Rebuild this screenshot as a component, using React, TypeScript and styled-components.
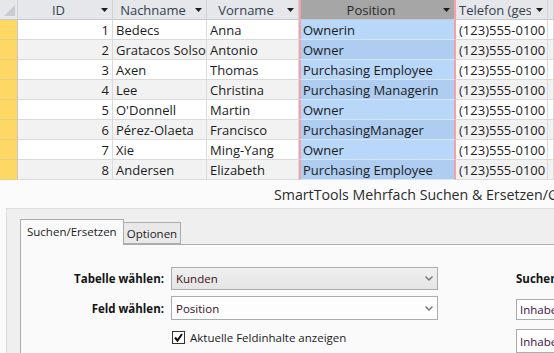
import styled, { createGlobalStyle } from 'styled-components'

const GlobalStyle = createGlobalStyle`
  html, body {
    margin: 0;
    padding: 0;
    background: #fafafa;
  }
  body {
    font-family: "Open Sans", "Noto Sans", sans-serif;
  }
`

type Person = {
  id: number
  last: string
  first: string
  position: string
}

const people: Person[] = [
  {id: 1, last: 'Bedecs', first: 'Anna', position: 'Ownerin'},
  {id: 2, last: 'Gratacos Solsona', first: 'Antonio', position: 'Owner'},
  {id: 3, last: 'Axen', first: 'Thomas', position: 'Purchasing Employee'},
  {id: 4, last: 'Lee', first: 'Christina', position: 'Purchasing Managerin'},
  {id: 5, last: "O'Donnell", first: 'Martin', position: 'Owner'},
  {id: 6, last: 'Pérez-Olaeta', first: 'Francisco', position: 'PurchasingManager'},
  {id: 7, last: 'Xie', first: 'Ming-Yang', position: 'Owner'},
  {id: 8, last: 'Andersen', first: 'Elizabeth', position: 'Purchasing Employee'},
]

const headers = [
  {label: 'ID'},
  {label: 'Nachname'},
  {label: 'Vorname'},
  {label: 'Position', selected: true},
  {label: 'Telefon (geschäftlich)'},
  {label: 'Telefax'},
]

export default function App() {
  return (
    <Screen>
      <GlobalStyle />
      <Sheet>
        <Row>
          <Corner>
            <svg width="18" height="19" viewBox="0 0 18 19">
              <polygon points="15,5 15,16 4,16" fill="#c9ccd2" />
            </svg>
          </Corner>
          {headers.map(h => (
            <HeaderCell key={h.label} $selected={h.selected}>
              <HeaderLabel>{h.label}</HeaderLabel>
              <DropArrow />
            </HeaderCell>
          ))}
        </Row>
        {people.map((p, i) => (
          <Row key={p.id} $alt={i % 2 === 1}>
            <Selector />
            <Cell $align="right">{p.id}</Cell>
            <Cell>{p.last}</Cell>
            <Cell>{p.first}</Cell>
            <Cell $selected $alt={i % 2 === 1}>{p.position}</Cell>
            <Cell>(123)555-0100</Cell>
            <Cell />
          </Row>
        ))}
      </Sheet>

      <Dialog>
        <TitleBar>SmartTools Mehrfach Suchen &amp; Ersetzen/Geändert</TitleBar>
        <Body>
          <TabStrip>
            <Tab $active>Suchen/Ersetzen</Tab>
            <Tab>Optionen</Tab>
          </TabStrip>
          <TabPage>
            <LeftForm>
              <FieldLabel>Tabelle wählen:</FieldLabel>
              <Combo $readonly>
                <ComboText>Kunden</ComboText>
                <Chevron />
              </Combo>
              <FieldLabel>Feld wählen:</FieldLabel>
              <Combo>
                <ComboText>Position</ComboText>
                <Chevron />
              </Combo>
              <span />
              <CheckRow>
                <CheckBox>
                  <svg width="11" height="11" viewBox="0 0 11 11">
                    <path d="M2 5.5 L4.5 8.5 L9 2" fill="none" stroke="#111" strokeWidth="2" />
                  </svg>
                </CheckBox>
                Aktuelle Feldinhalte anzeigen
              </CheckRow>
            </LeftForm>
            <RightForm>
              <SearchLabel>Suchen</SearchLabel>
              <TextBox>Inhaber</TextBox>
              <TextBox $tall>Inhaber</TextBox>
            </RightForm>
          </TabPage>
        </Body>
      </Dialog>
    </Screen>
  )
}

function DropArrow() {
  return (
    <ArrowBox>
      <svg width="7" height="4" viewBox="0 0 7 4">
        <path d="M0 0 H7 L3.5 4 Z" fill="#1e1e1e" />
      </svg>
    </ArrowBox>
  )
}

function Chevron() {
  return (
    <ChevronBox>
      <svg width="8" height="5" viewBox="0 0 8 5">
        <path d="M0.5 0.5 L4 4 L7.5 0.5" fill="none" stroke="#707070" strokeWidth="1.3" />
      </svg>
    </ChevronBox>
  )
}

const Screen = styled.div`
  width: 554px;
  height: 353px;
  overflow: hidden;
  display: flex;
  flex-direction: column;
  background: #fafafa;
`

const Sheet = styled.div`
  display: flex;
  flex-direction: column;
  background: #fff;
  flex-shrink: 0;
`

const Row = styled.div<{$alt?: boolean}>`
  display: grid;
  grid-template-columns: 18px 95px 94px 92px 157px 92px 1fr;
  height: 20px;
  background: ${p => (p.$alt ? '#f2f2f2' : '#ffffff')};
  font-size: 13px;
`

const Corner = styled.div`
  background: #e6e7eb;
  border-right: 1px solid #d0d2d6;
  border-bottom: 1px solid #c8cace;
  overflow: hidden;
`

const HeaderCell = styled.div<{$selected?: boolean}>`
  display: flex;
  align-items: center;
  min-width: 0;
  background: ${p => (p.$selected ? '#a6a6a6' : '#e6e7eb')};
  color: ${p => (p.$selected ? '#2a2a2a' : '#34404f')};
  border-right: ${p => (p.$selected ? '2px solid #f3a3a8' : '1px solid #d0d2d6')};
  border-left: ${p => (p.$selected ? '2px solid #f3a3a8' : 'none')};
  border-bottom: 1px solid #c8cace;
`

const HeaderLabel = styled.span`
  flex: 1;
  min-width: 0;
  overflow: hidden;
  white-space: nowrap;
  text-align: center;
  padding-left: 3px;
`

const ArrowBox = styled.span`
  display: flex;
  align-items: center;
  width: 16px;
  height: 100%;
  justify-content: center;
  flex-shrink: 0;
`

const Selector = styled.div`
  background: #fdd864;
  border-right: 1px solid #c9c9c9;
  border-bottom: 1px solid #e9cf86;
`

const Cell = styled.div<{$align?: 'right'; $selected?: boolean; $alt?: boolean}>`
  display: flex;
  align-items: center;
  justify-content: ${p => (p.$align === 'right' ? 'flex-end' : 'flex-start')};
  padding: ${p => (p.$align === 'right' ? '0 3px 0 0' : '0 0 0 3px')};
  min-width: 0;
  overflow: hidden;
  white-space: nowrap;
  color: #1c1c1c;
  border-right: 1px solid #dadada;
  border-bottom: 1px solid #dadada;
  ${p =>
    p.$selected &&
    `
    background: ${p.$alt ? '#aecdf1' : '#b9d7f9'};
    border-left: 2px solid #f3a3a8;
    border-right: 2px solid #f3a3a8;
    border-bottom: 1px solid #d3e6fb;
    padding-left: 2px;
  `}
`

const Dialog = styled.section`
  flex: 1;
  display: flex;
  flex-direction: column;
  min-height: 0;
`

const TitleBar = styled.div`
  height: 28px;
  flex-shrink: 0;
  display: flex;
  align-items: center;
  padding-left: 274px;
  font-size: 14.2px;
  color: #2b2b2b;
  white-space: nowrap;
  overflow: hidden;
  background: #fbfbfb;
`

const Body = styled.div`
  flex: 1;
  display: flex;
  flex-direction: column;
  margin-left: 6px;
  padding: 13px 0 0 13px;
  background: #efefef;
  border-top: 1px solid #dcdcdc;
  border-left: 1px solid #dcdcdc;
`

const TabStrip = styled.div`
  display: flex;
  align-items: flex-end;
  height: 22px;
  position: relative;
  z-index: 1;
`

const Tab = styled.div<{$active?: boolean}>`
  display: flex;
  align-items: center;
  height: ${p => (p.$active ? '23px' : '20px')};
  margin-bottom: ${p => (p.$active ? '-1px' : '0')};
  padding: ${p => (p.$active ? '0 6px 2px 6px' : '0 3px')};
  background: ${p => (p.$active ? '#fafafa' : '#e9e9e9')};
  border: 1px solid #acacac;
  border-bottom: ${p => (p.$active ? 'none' : '1px solid #acacac')};
  border-left: ${p => (p.$active ? '1px solid #acacac' : 'none')};
  font-size: 11.5px;
  color: #1c1c1c;
  white-space: nowrap;
`

const TabPage = styled.div`
  flex: 1;
  display: flex;
  background: #fafafa;
  border-top: 1px solid #acacac;
  border-left: 1px solid #acacac;
`

const LeftForm = styled.div`
  display: grid;
  grid-template-columns: 143px 267px;
  grid-auto-rows: min-content;
  column-gap: 7px;
  row-gap: 6px;
  margin-top: 22px;
`

const FieldLabel = styled.div`
  display: flex;
  align-items: center;
  justify-content: flex-end;
  font-size: 11.5px;
  font-weight: 700;
  color: #141414;
  white-space: nowrap;
`

const Combo = styled.div<{$readonly?: boolean}>`
  display: flex;
  align-items: center;
  height: ${p => (p.$readonly ? '23px' : '24px')};
  box-sizing: border-box;
  border: 1px solid #acacac;
  background: ${p => (p.$readonly ? 'linear-gradient(#efefef, #e5e5e5)' : '#fdfdfd')};
`

const ComboText = styled.span`
  flex: 1;
  padding-left: 4px;
  font-size: 11.5px;
  color: #3a1020;
`

const ChevronBox = styled.span`
  display: flex;
  width: 16px;
  justify-content: center;
`

const CheckRow = styled.label`
  display: flex;
  align-items: center;
  gap: 5px;
  height: 20px;
  margin-top: 1px;
  font-size: 11.5px;
  color: #1c1c1c;
  white-space: nowrap;
`

const CheckBox = styled.span`
  display: flex;
  align-items: center;
  justify-content: center;
  width: 13px;
  height: 13px;
  margin-left: 1px;
  box-sizing: border-box;
  border: 1px solid #333;
  background: #fff;
`

const RightForm = styled.div`
  display: flex;
  flex-direction: column;
  margin-left: 78px;
  margin-top: 22px;
  flex: 1;
`

const SearchLabel = styled.div`
  display: flex;
  align-items: center;
  height: 23px;
  font-size: 11.5px;
  font-weight: 700;
  color: #141414;
  white-space: nowrap;
`

const TextBox = styled.div<{$tall?: boolean}>`
  display: flex;
  align-items: center;
  height: ${p => (p.$tall ? '24px' : '21px')};
  margin-top: 9px;
  box-sizing: border-box;
  padding-left: 3px;
  border: 1px solid #acacac;
  background: #fff;
  font-size: 11.5px;
  color: #3a1040;
  white-space: nowrap;
`
